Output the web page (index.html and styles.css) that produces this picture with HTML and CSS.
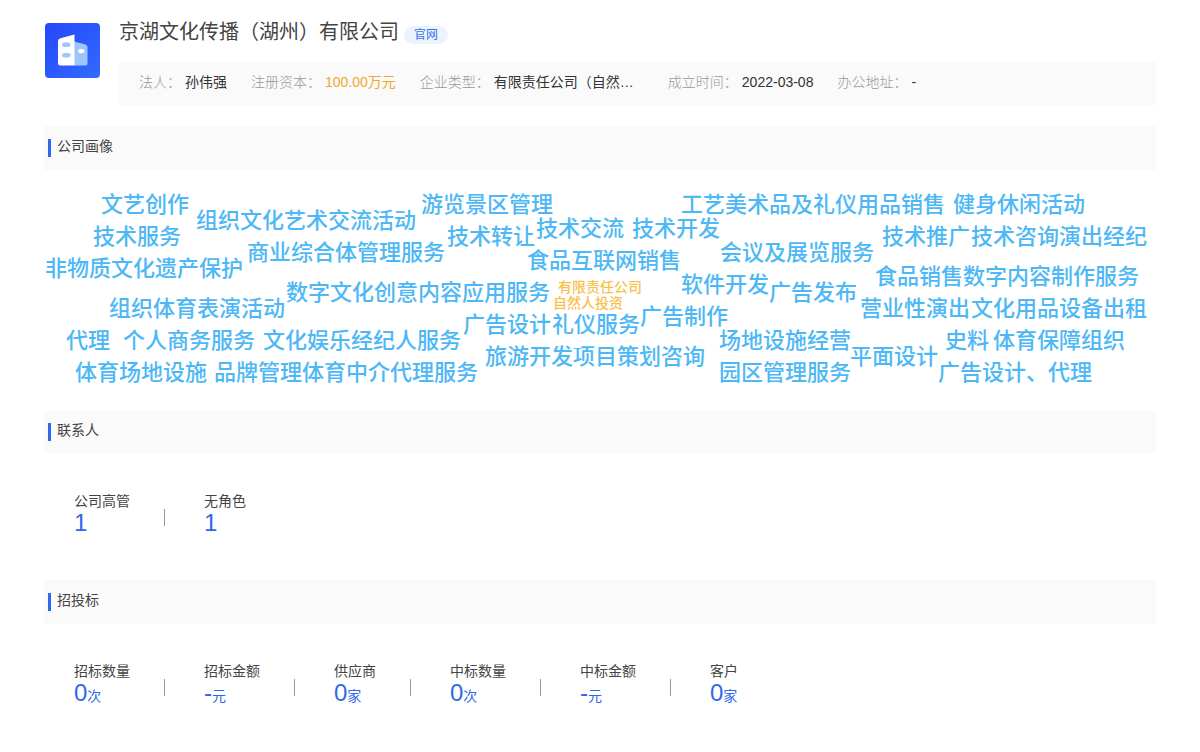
FILE: index.html
```html
<!DOCTYPE html>
<html lang="zh-CN">
<head>
<meta charset="utf-8">
<title>京湖文化传播（湖州）有限公司</title>
<link rel="stylesheet" href="styles.css">
</head>
<body>
<main class="page">
  <header class="company">
    <svg class="logo" viewBox="0 0 55 55" role="img" aria-label="公司">
      <defs>
        <linearGradient id="logo-bg" x1="0" y1="0" x2="1" y2="1">
          <stop offset="0" stop-color="#2448fb"/>
          <stop offset="1" stop-color="#336bfd"/>
        </linearGradient>
      </defs>
      <rect width="55" height="55" rx="4" fill="url(#logo-bg)"/>
      <path d="M29 18.500L40.500 21.500Q42.500 22 42.500 24V40.500Q42.500 42.500 40.500 42.500H29Z" fill="#9cc6fb"/>
      <path d="M15.500 15.200L29.500 11.500V42.500H15.500Q13 42.500 13 40V18Q13 15.800 15.500 15.200Z" fill="#fff"/>
      <rect x="17" y="19.500" width="8.500" height="4.600" rx="2.300" fill="#a3c6f8"/>
      <rect x="17" y="30" width="8.500" height="4.600" rx="2.300" fill="#a3c6f8"/>
      <rect x="33" y="26" width="6.500" height="4.200" rx="2.100" fill="#fff"/>
    </svg>
    <div class="company-main">
      <div class="title-row">
        <h1 class="title">京湖文化传播（湖州）有限公司</h1>
        <a class="badge" href="#">官网</a>
      </div>
      <dl class="info">
        <div class="info-item"><dt>法人：</dt><dd>孙伟强</dd></div>
        <div class="info-item"><dt>注册资本：</dt><dd class="money">100.00万元</dd></div>
        <div class="info-item"><dt>企业类型：</dt><dd class="type">有限责任公司（自然…</dd></div>
        <div class="info-item"><dt>成立时间：</dt><dd>2022-03-08</dd></div>
        <div class="info-item"><dt>办公地址：</dt><dd>-</dd></div>
      </dl>
    </div>
  </header>

  <section>
    <h2 class="section-title">公司画像</h2>
    <div class="cloud">
      <span class="word" style="--x:-499px;--y:35px">文艺创作</span>
      <span class="word" style="--x:-404px;--y:51px">组织文化艺术交流活动</span>
      <span class="word" style="--x:-179px;--y:35px">游览景区管理</span>
      <span class="word" style="--x:81px;--y:35px">工艺美术品及礼仪用品销售</span>
      <span class="word" style="--x:353px;--y:35px">健身休闲活动</span>
      <span class="word" style="--x:-507px;--y:67px">技术服务</span>
      <span class="word" style="--x:-353px;--y:83px">商业综合体管理服务</span>
      <span class="word" style="--x:-153px;--y:67px">技术转让</span>
      <span class="word" style="--x:-64px;--y:59px">技术交流</span>
      <span class="word" style="--x:32px;--y:59px">技术开发</span>
      <span class="word" style="--x:-73px;--y:91px">食品互联网销售</span>
      <span class="word" style="--x:120px;--y:83px">会议及展览服务</span>
      <span class="word" style="--x:282px;--y:67px">技术推广</span>
      <span class="word" style="--x:371px;--y:67px">技术咨询</span>
      <span class="word" style="--x:459px;--y:67px">演出经纪</span>
      <span class="word" style="--x:-555px;--y:99px">非物质文化遗产保护</span>
      <span class="word" style="--x:-314px;--y:123px">数字文化创意内容应用服务</span>
      <span class="word small" style="--x:-42px;--y:117px">有限责任公司</span>
      <span class="word small" style="--x:-47px;--y:133px">自然人投资</span>
      <span class="word" style="--x:81px;--y:115px">软件开发</span>
      <span class="word" style="--x:169px;--y:123px">广告发布</span>
      <span class="word" style="--x:275px;--y:107px">食品销售</span>
      <span class="word" style="--x:363px;--y:107px">数字内容制作服务</span>
      <span class="word" style="--x:-491px;--y:139px">组织体育表演活动</span>
      <span class="word" style="--x:-137px;--y:155px">广告设计</span>
      <span class="word" style="--x:-48px;--y:155px">礼仪服务</span>
      <span class="word" style="--x:40px;--y:147px">广告制作</span>
      <span class="word" style="--x:260px;--y:139px">营业性演出</span>
      <span class="word" style="--x:371px;--y:139px">文化用品设备出租</span>
      <span class="word" style="--x:-534px;--y:171px">代理</span>
      <span class="word" style="--x:-477px;--y:171px">个人商务服务</span>
      <span class="word" style="--x:-337px;--y:171px">文化娱乐经纪人服务</span>
      <span class="word" style="--x:-115px;--y:187px">旅游开发项目策划咨询</span>
      <span class="word" style="--x:119px;--y:171px">场地设施经营</span>
      <span class="word" style="--x:250px;--y:187px">平面设计</span>
      <span class="word" style="--x:345px;--y:171px">史料</span>
      <span class="word" style="--x:393px;--y:171px">体育保障组织</span>
      <span class="word" style="--x:-525px;--y:203px">体育场地设施</span>
      <span class="word" style="--x:-386px;--y:203px">品牌管理</span>
      <span class="word" style="--x:-298px;--y:203px">体育中介代理服务</span>
      <span class="word" style="--x:119px;--y:203px">园区管理服务</span>
      <span class="word" style="--x:338px;--y:203px">广告设计、代理</span>
    </div>
  </section>

  <section>
    <h2 class="section-title">联系人</h2>
    <ul class="stats">
      <li class="stat"><span class="stat-label">公司高管</span><span class="stat-value">1</span></li>
      <li class="stat"><span class="stat-label">无角色</span><span class="stat-value">1</span></li>
    </ul>
  </section>

  <section>
    <h2 class="section-title">招投标</h2>
    <ul class="stats">
      <li class="stat"><span class="stat-label">招标数量</span><span class="stat-value">0<small>次</small></span></li>
      <li class="stat"><span class="stat-label">招标金额</span><span class="stat-value">-<small>元</small></span></li>
      <li class="stat"><span class="stat-label">供应商</span><span class="stat-value">0<small>家</small></span></li>
      <li class="stat"><span class="stat-label">中标数量</span><span class="stat-value">0<small>次</small></span></li>
      <li class="stat"><span class="stat-label">中标金额</span><span class="stat-value">-<small>元</small></span></li>
      <li class="stat"><span class="stat-label">客户</span><span class="stat-value">0<small>家</small></span></li>
    </ul>
  </section>
</main>
</body>
</html>
```

FILE: styles.css
```css
* {
  box-sizing: border-box;
  margin: 0;
  padding: 0;
}

body {
  background: #fff;
  color: #444;
  font: 14px/20px "Liberation Sans", "Noto Sans CJK SC", sans-serif;
}

.page {
  padding: 18px 44px 0;
}

.company {
  display: flex;
  gap: 19px;
  padding-left: 1px;
  margin-bottom: 21px;
}

.logo {
  flex: none;
  width: 55px;
  height: 55px;
  margin-top: 5px;
}

.company-main {
  flex: 1;
  min-width: 0;
}

.title-row {
  display: flex;
  align-items: flex-start;
  gap: 5px;
  margin-bottom: 16px;
}

.title {
  font-size: 20px;
  line-height: 28px;
  font-weight: 400;
}

.badge {
  margin-top: 8px;
  padding: 0 10px;
  border-radius: 9px;
  background: #ecf3fd;
  color: #3a74e8;
  font-size: 12px;
  line-height: 18px;
  text-decoration: none;
}

.info {
  display: flex;
  gap: 24px;
  padding: 10px 20px 13px;
  background: #fafafa;
}

.info-item {
  display: flex;
  gap: 4px;
  white-space: nowrap;
}

.info dt {
  color: #999;
  font-weight: 300;
}

.info dd {
  color: #333;
}

.info .money {
  color: #efa82f;
}

.type {
  min-width: 150px;
}

.section-title {
  display: flex;
  align-items: flex-start;
  gap: 6px;
  padding: 10px 4px 13px;
  background: #fafafa;
  font-size: 14px;
  line-height: 20px;
  font-weight: 400;
}

.section-title::before {
  content: "";
  width: 3px;
  height: 18px;
  margin-top: 3px;
  background: #2f68ea;
}

.cloud {
  position: relative;
  height: 240px;
}

.word {
  position: absolute;
  left: calc(50% + var(--x));
  top: var(--y);
  color: #4db8f5;
  font-size: 22px;
  line-height: 24px;
  font-weight: 500;
  white-space: nowrap;
  transform: translateY(-50%);
}

.word.small {
  color: #f9bf4d;
  font-size: 14px;
  line-height: 16px;
}

.stats {
  display: flex;
  padding: 37px 30px 45px;
  list-style: none;
}

.stat {
  display: flex;
  flex-direction: column;
}

.stat + .stat {
  position: relative;
  margin-left: 34px;
  padding-left: 40px;
}

.stat + .stat::before {
  content: "";
  position: absolute;
  left: 0;
  top: 18px;
  width: 1px;
  height: 17px;
  background: #999;
}

.stat-value {
  color: #2f68ea;
  font-size: 24px;
  line-height: 24px;
}

.stat-value small {
  font-size: 14px;
}
```
